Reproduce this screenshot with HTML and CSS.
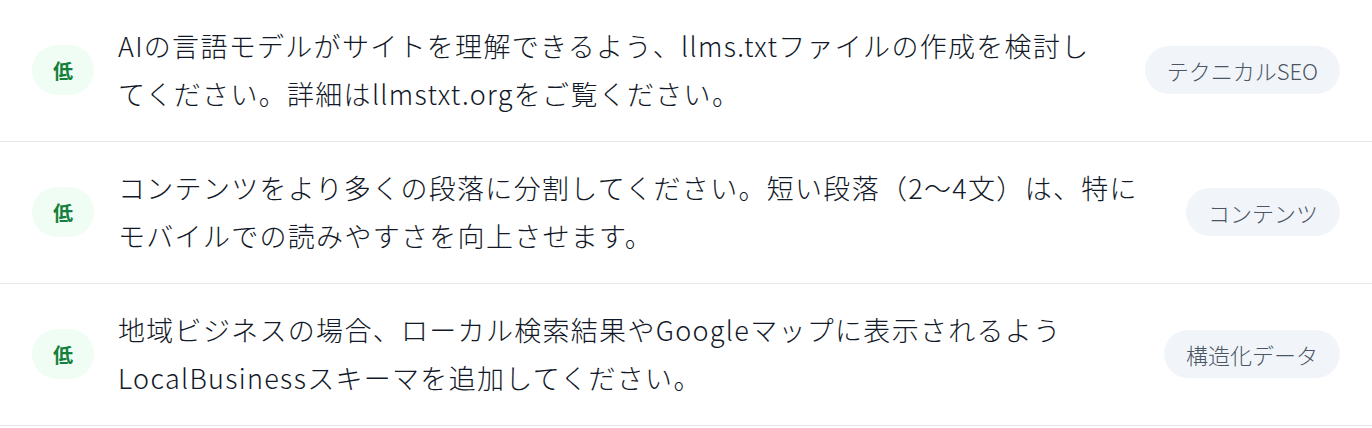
FILE: index.html
```html
<!DOCTYPE html>
<html lang="ja">
<head>
    <meta charset="UTF-8">
    <meta name="viewport" content="width=device-width, initial-scale=1.0">
    <title>改善提案</title>
    <link rel="stylesheet" href="styles.css">
</head>
<body>
    <ul class="suggestion-list">
        <li class="suggestion">
            <span class="priority">低</span>
            <p class="suggestion-text">AIの言語モデルがサイトを理解できるよう、llms.txtファイルの作成を検討してください。詳細はllmstxt.orgをご覧ください。</p>
            <span class="category">テクニカルSEO</span>
        </li>
        <li class="suggestion">
            <span class="priority">低</span>
            <p class="suggestion-text">コンテンツをより多くの段落に分割してください。短い段落（2〜4文）は、特にモバイルでの読みやすさを向上させます。</p>
            <span class="category">コンテンツ</span>
        </li>
        <li class="suggestion">
            <span class="priority">低</span>
            <p class="suggestion-text">地域ビジネスの場合、ローカル検索結果やGoogleマップに表示されるようLocalBusinessスキーマを追加してください。</p>
            <span class="category">構造化データ</span>
        </li>
    </ul>
</body>
</html>
```

FILE: styles.css
```css
body {
    margin: 0;
    background: #ffffff;
    font-family: "Noto Sans CJK JP", "Noto Sans", sans-serif;
    color: #111827;
}

.suggestion-list {
    list-style: none;
    margin: 0;
    padding: 0;
}

.suggestion {
    display: flex;
    align-items: center;
    gap: 24px;
    padding: 22px 32px 23px;
    border-bottom: 1px solid #e5e7eb;
}

.priority {
    flex-shrink: 0;
    width: 62px;
    height: 50px;
    display: flex;
    align-items: center;
    justify-content: center;
    border-radius: 9999px;
    background-color: #f0fdf4;
    color: #15803d;
    font-size: 20px;
    font-weight: bold;
}

.suggestion-text {
    flex: 1;
    margin: 0 16px 0 0;
    font-size: 27px;
    font-weight: 300;
    letter-spacing: 1.3px;
    line-height: 48px;
}

.category {
    flex-shrink: 0;
    padding: 0 22px;
    height: 48px;
    line-height: 48px;
    border-radius: 9999px;
    background-color: #f1f5f9;
    color: #4b5563;
    font-size: 22px;
    font-weight: 300;
}
```
